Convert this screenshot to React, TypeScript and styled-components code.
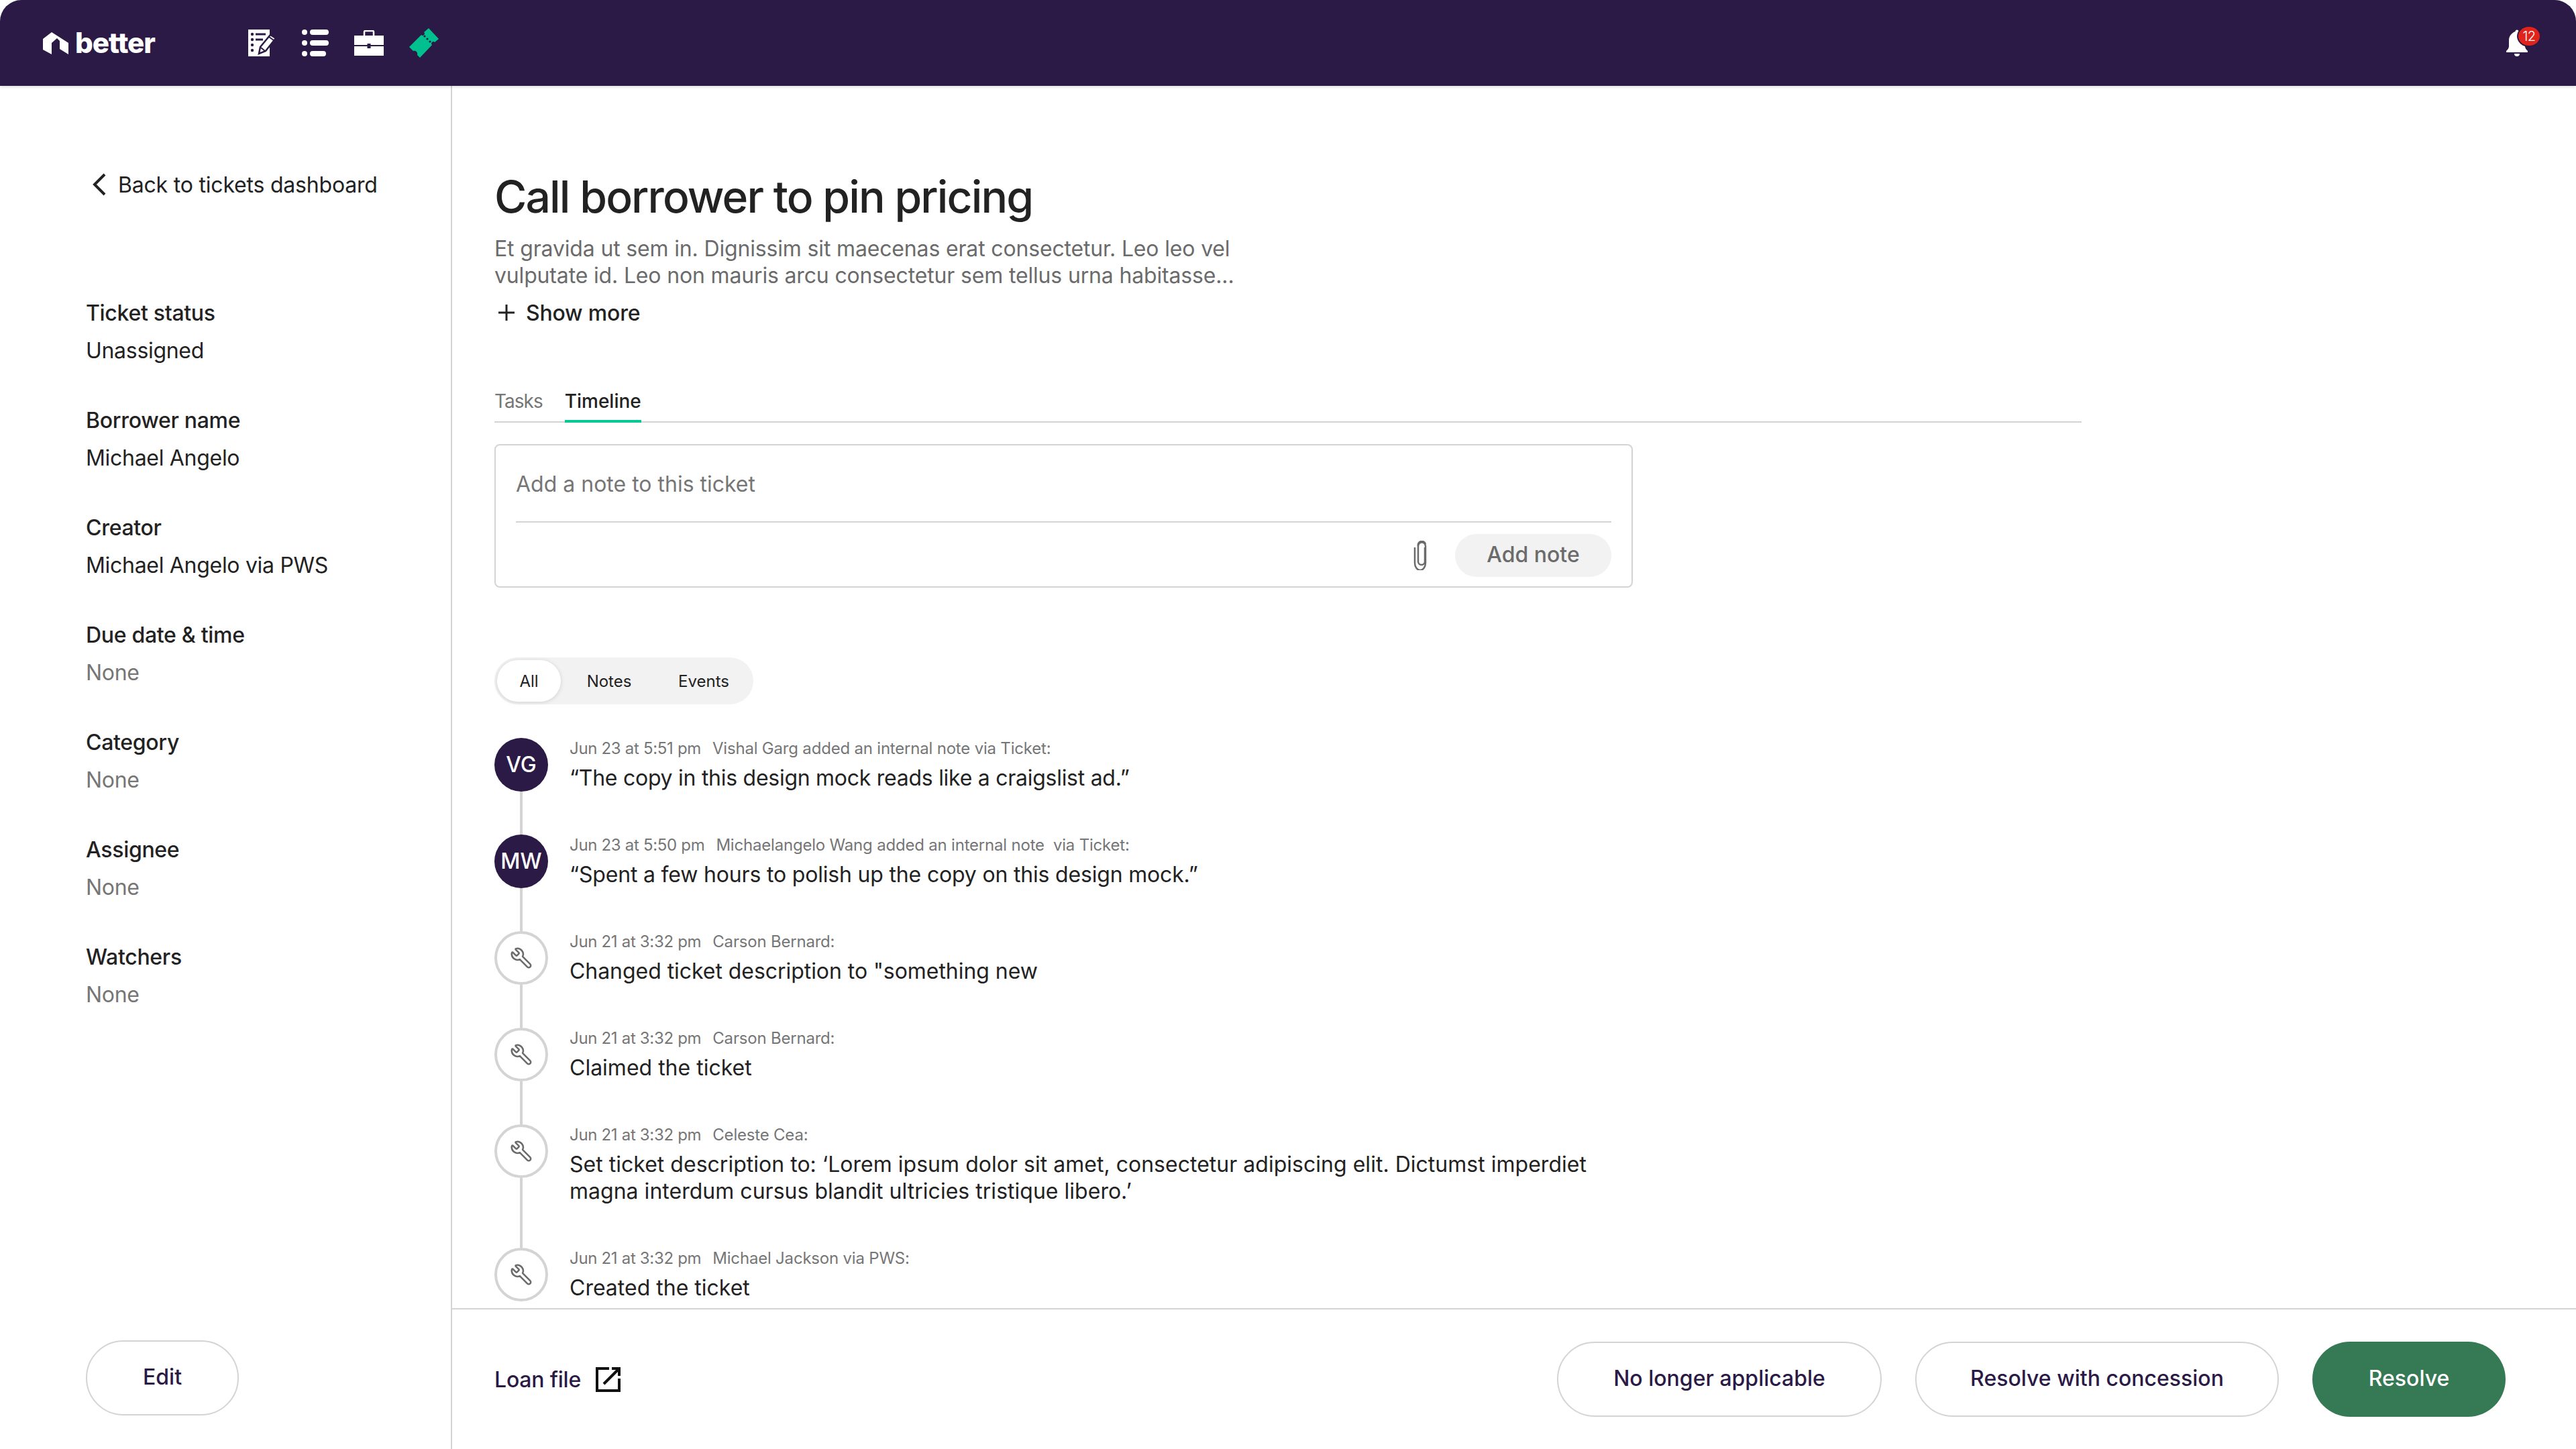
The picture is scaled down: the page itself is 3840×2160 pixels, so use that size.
import React from "react";
import styled, { createGlobalStyle } from "styled-components";
import { Wrench } from "lucide-react";

const Global = createGlobalStyle`
  html, body { margin: 0; padding: 0; background: #fff; }
  body { font-family: Inter, "Liberation Sans", sans-serif; color: #222; }
  * { box-sizing: border-box; }
  svg { display: block; flex: none; }
`;
const Page = styled.div`width: 3840px; height: 2160px; display: flex; flex-direction: column; overflow: hidden; background: #fff;`;
const Header = styled.header`
  height: 128px; flex: none; background: #2b1a45; border-radius: 32px 32px 0 0; display: flex; align-items: center;
  padding: 0 54px 0 64px; box-shadow: 0 2px 4px rgba(0,0,0,.12); position: relative; z-index: 2;
`;
const Logo = styled.div`display: flex; align-items: center; gap: 10px; width: 306px; flex: none;`;
const LogoText = styled.span`font-size: 42px; font-weight: 800; color: #fff; line-height: 44px; letter-spacing: -1px;`;
const NavIcons = styled.nav`display: flex; align-items: center; gap: 38px;`;
const Spacer = styled.div`flex: 1;`;
const BellWrap = styled.div`position: relative; width: 50px; height: 44px; padding-top: 2px;`;
const Badge = styled.span`
  position: absolute; left: 18px; top: -2px; width: 32px; height: 28px; border-radius: 50%; background: #e0241c;
  color: #fff; font-size: 20px; line-height: 28px; text-align: center; box-shadow: 0 0 0 2px #2b1a45; font-weight: 300; letter-spacing: -.5px;
`;
const Body = styled.div`flex: 1; display: flex; min-height: 0;`;
const Sidebar = styled.aside`
  width: 674px; flex: none; border-right: 2px solid #d4d4d4; padding: 127px 0 50px 128px; display: flex; flex-direction: column;
`;
const BackLink = styled.div`display: flex; align-items: center; gap: 18px; height: 40px; font-size: 32px; padding-left: 10px; color: #222; letter-spacing: -.2px;`;
const Fields = styled.div`margin-top: 152px; display: flex; flex-direction: column; gap: 64px;`;
const Field = styled.div`display: flex; flex-direction: column; gap: 16px;`;
const Label = styled.div`font-size: 32px; line-height: 40px; font-weight: 500; color: #222; letter-spacing: -.3px;`;
const Value = styled.div<{ $muted?: boolean }>`font-size: 32px; line-height: 40px; color: ${p => p.$muted ? "#767676" : "#222"}; letter-spacing: -.3px;`;
const EditButton = styled.button`
  margin-top: auto; width: 228px; height: 112px; border-radius: 56px; border: 2px solid #d4d4d4; background: #fff; padding: 0 0 3px;
  font: 500 32px Inter, sans-serif; color: #2b1a45;
`;
const Main = styled.main`flex: 1; min-width: 0; display: flex; flex-direction: column;`;
const Scroll = styled.div`flex: 1; min-height: 0; overflow: hidden; padding: 125px 0 0 63px;`;
const Title = styled.h1`margin: 0; font-size: 66px; line-height: 80px; font-weight: 500; color: #222; letter-spacing: -1.9px;`;
const Description = styled.p`margin: 18px 0 0; font-size: 32px; line-height: 40px; color: #6b6b6b; letter-spacing: -.16px;`;
const ShowMore = styled.div`margin-top: 15px; display: flex; align-items: center; gap: 16px; padding-left: 5px; height: 40px; font-size: 32px; font-weight: 500; color: #222; letter-spacing: -.2px;`;
const Tabs = styled.div`margin-top: 94px; width: 2366px; height: 50px; border-bottom: 2px solid #d4d4d4; display: flex; gap: 33px; align-items: flex-start;`;
const Tab = styled.div<{ $active?: boolean }>`
  height: 50px; font-size: 28px; line-height: 36px; font-weight: ${p => p.$active ? 500 : 400}; color: ${p => p.$active ? "#222" : "#767676"};
  letter-spacing: ${p => p.$active ? "0" : "-1px"};
  border-bottom: 4px solid ${p => p.$active ? "#00c996" : "transparent"};
`;
const NoteBox = styled.div`margin-top: 32px; width: 1697px; height: 214px; border: 2px solid #d4d4d4; border-radius: 8px; padding: 0 30px; display: flex; flex-direction: column;`;
const Placeholder = styled.div`height: 115px; padding-top: 38px; font-size: 32px; line-height: 40px; color: #767676; border-bottom: 2px solid #d4d4d4;`;
const NoteActions = styled.div`display: flex; justify-content: flex-end; align-items: center; gap: 38px; margin-top: 17px;`;
const AddNote = styled.button`width: 233px; height: 64px; border-radius: 32px; border: none; background: #f2f2f2; padding: 0 0 3px; font: 500 32px Inter, sans-serif; color: #6b6b6b;`;
const Filter = styled.div`margin-top: 104px; width: 386px; height: 70px; border-radius: 35px; background: #f2f2f2; display: flex; align-items: center; padding: 0 4px;`;
const FilterItem = styled.div<{ $active?: boolean; $w: number }>`
  width: ${p => p.$w}px; height: 62px; border-radius: 31px; display: flex; align-items: center; justify-content: center; font-size: 24px; color: #222;
  ${p => p.$active ? "background:#fff; box-shadow: 0 1px 6px rgba(0,0,0,.14);" : ""}
`;
const Timeline = styled.div`margin-top: 50px; width: 1700px;`;
const Row = styled.div<{ $h: number }>`height: ${p => p.$h}px; display: flex; gap: 32px;`;
const Rail = styled.div`width: 80px; flex: none; display: flex; flex-direction: column; align-items: center;`;
const Avatar = styled.div`width: 80px; height: 80px; flex: none; border-radius: 50%; background: #2b1a45; color: #fff; font-size: 32px; font-weight: 500; padding-bottom: 2px; display: flex; align-items: center; justify-content: center;`;
const EventDot = styled.div`width: 80px; height: 80px; flex: none; border-radius: 50%; border: 4px solid #d4d4d4; color: #6b6b6b; display: flex; align-items: center; justify-content: center;`;
const Connector = styled.div`width: 4px; flex: 1; background: #d4d4d4;`;
const Entry = styled.div`min-width: 0;`;
const Meta = styled.div`display: flex; gap: 17px; font-size: 24px; line-height: 32px; color: #767676; white-space: pre; letter-spacing: -.2px;`;
const Time = styled.span`letter-spacing: -.32px;`;
const Text = styled.div<{ $track: number }>`margin-top: 8px; font-size: 32px; line-height: 40px; color: #222; letter-spacing: ${p => p.$track}px;`;
const Footer = styled.footer`height: 210px; flex: none; border-top: 2px solid #d4d4d4; display: flex; align-items: center; padding: 0 105px 0 63px; background: #fff;`;
const LoanFile = styled.div`display: flex; align-items: center; gap: 22px; font-size: 32px; font-weight: 500; color: #2b1a45; letter-spacing: -.2px;`;
const Actions = styled.div`margin-left: auto; display: flex; gap: 50px;`;
const Pill = styled.button<{ $w: number; $primary?: boolean }>`
  width: ${p => p.$w}px; height: 112px; border-radius: 56px; padding: 0 0 3px; font: 500 32px Inter, sans-serif;
  border: ${p => p.$primary ? "none" : "2px solid #d4d4d4"}; background: ${p => p.$primary ? "#357a54" : "#fff"}; color: ${p => p.$primary ? "#fff" : "#2b1a45"};
`;

const HouseLogo = () => (
  <svg width="38" height="33" viewBox="0 0 38 33" fill="#fff">
    <path d="M0 10 13 0 38 16V33L25 25V13L21 9 13 16V33L0 26Z" />
  </svg>
);
const NoteIcon = () => (
  <svg width="42" height="40" viewBox="0 0 42 40">
    <path fill="#fff" d="M0 0H32V40H0Z" />
    <g fill="#2b1a45">
      <circle cx="6" cy="7" r="2.2" /><circle cx="6" cy="15" r="2.2" /><circle cx="6" cy="23" r="2.2" /><circle cx="6" cy="31" r="2.2" />
      <rect x="11" y="5.5" width="15" height="3" /><rect x="11" y="13.5" width="11" height="3" />
    </g>
    <path d="M16 36 18 26 33 8 41 13 26 32Z" fill="#fff" stroke="#2b1a45" strokeWidth="2.5" />
    <path d="M19 27 25 32" stroke="#2b1a45" strokeWidth="2" />
    <path d="M31 11 38 16" stroke="#2b1a45" strokeWidth="2" />
  </svg>
);
const ListIcon = () => (
  <svg width="40" height="40" viewBox="0 0 40 40" fill="#fff">
    <circle cx="4" cy="4" r="4" /><circle cx="4" cy="20" r="4" /><circle cx="4" cy="36" r="4" />
    <rect x="12" y="0" width="28" height="8" rx="4" /><rect x="12" y="16" width="28" height="8" rx="4" /><rect x="12" y="32" width="24" height="8" rx="4" />
  </svg>
);
const CaseIcon = () => (
  <svg width="44" height="38" viewBox="0 0 44 38" fill="#fff">
    <path d="M15 8V2.500A1.500 1.500 0 0 1 16.500 1h11A1.500 1.500 0 0 1 29 2.500V8" fill="none" stroke="#fff" strokeWidth="2.5" />
    <path d="M0 8H44V22H24.500V20H19.500V22H0Z" />
    <path d="M0 24H19.500V27H24.500V24H44V38H0Z" />
  </svg>
);
const TicketIcon = () => (
  <svg width="44" height="44" viewBox="0 0 44 44">
    <path fill="#00c08f" d="M29 0 44 16 38 21A2.800 2.800 0 0 0 34 25L16 44 12 40C13 36 10 33 6 34L0 28 18 10A2.800 2.800 0 0 0 22 6Z" />
    <g fill="#2b1a45"><circle cx="23" cy="12" r="1.600" /><circle cx="27" cy="16" r="1.600" /><circle cx="31" cy="20" r="1.600" /></g>
  </svg>
);
const BellIcon = () => (
  <svg width="32" height="40" viewBox="0 0 32 40" fill="#fff">
    <circle cx="16" cy="3" r="2.500" />
    <path d="M16 2C9 4 4 9 4 16V25C4 28 2 30 0 32V34H32V32C30 30 28 28 28 25V16C28 9 23 4 16 2Z" />
    <path d="M12 36H20A4 4 0 0 1 12 36Z" />
  </svg>
);
const Chevron = () => (
  <svg width="20" height="34" viewBox="0 0 20 34" fill="none" stroke="#222" strokeWidth="4"><path d="M18 2 3 17 18 32" /></svg>
);
const Plus = () => (
  <svg width="26" height="26" viewBox="0 0 26 26" stroke="#222" strokeWidth="3"><path d="M13 1V25M1 13H25" /></svg>
);
const Clip = () => (
  <svg width="24" height="44" viewBox="0 0 24 44" fill="none" stroke="#6b6b6b" strokeWidth="2.500">
    <path d="M17 10V31A5 5 0 0 1 7 31V8A5.500 5.500 0 0 1 18 5" />
    <path d="M7 8A5.500 5.500 0 0 1 18 8V33A6.500 9 0 0 1 2 33V10" />
  </svg>
);
const External = () => (
  <svg width="37" height="37" viewBox="0 0 37 37" fill="none" stroke="#111" strokeWidth="4">
    <path d="M20 2H2V35H35V17" />
    <path d="M12 25 33 4" /><path d="M24 2H35V13" />
  </svg>
);

const fields: [string, string, boolean?][] = [
  ["Ticket status", "Unassigned"],
  ["Borrower name", "Michael Angelo"],
  ["Creator", "Michael Angelo via PWS"],
  ["Due date & time", "None", true],
  ["Category", "None", true],
  ["Assignee", "None", true],
  ["Watchers", "None", true],
];
type Ev = { who?: string; time: string; meta: string; text: React.ReactNode; h: number; track: number; last?: boolean };
const events: Ev[] = [
  { who: "VG", time: "Jun 23 at 5:51 pm", meta: "Vishal Garg added an internal note via Ticket:", text: "“The copy in this design mock reads like a craigslist ad.”", h: 144, track: -0.27 },
  { who: "MW", time: "Jun 23 at 5:50 pm", meta: "Michaelangelo Wang added an internal note  via Ticket:", text: "“Spent a few hours to polish up the copy on this design mock.”", h: 144, track: -0.18 },
  { time: "Jun 21 at 3:32 pm", meta: "Carson Bernard:", text: "Changed ticket description to \"something new", h: 144, track: -0.05 },
  { time: "Jun 21 at 3:32 pm", meta: "Carson Bernard:", text: "Claimed the ticket", h: 144, track: 0 },
  { time: "Jun 21 at 3:32 pm", meta: "Celeste Cea:", text: <>Set ticket description to: ‘Lorem ipsum dolor sit amet, consectetur adipiscing elit. Dictumst imperdiet<br />magna interdum cursus blandit ultricies tristique libero.’</>, h: 184, track: 0.02 },
  { time: "Jun 21 at 3:32 pm", meta: "Michael Jackson via PWS:", text: "Created the ticket", h: 90, track: 0, last: true },
];

export default function App() {
  return (
    <Page>
      <Global />
      <Header>
        <Logo><HouseLogo /><LogoText>better</LogoText></Logo>
        <NavIcons><NoteIcon /><ListIcon /><CaseIcon /><TicketIcon /></NavIcons>
        <Spacer />
        <BellWrap><BellIcon /><Badge>12</Badge></BellWrap>
      </Header>
      <Body>
        <Sidebar>
          <BackLink><Chevron />Back to tickets dashboard</BackLink>
          <Fields>
            {fields.map(([l, v, m]) => (
              <Field key={l}><Label>{l}</Label><Value $muted={m}>{v}</Value></Field>
            ))}
          </Fields>
          <EditButton>Edit</EditButton>
        </Sidebar>
        <Main>
          <Scroll>
            <Title>Call borrower to pin pricing</Title>
            <Description>Et gravida ut sem in. Dignissim sit maecenas erat consectetur. Leo leo vel<br />vulputate id. Leo non mauris arcu consectetur sem tellus urna habitasse...</Description>
            <ShowMore><Plus />Show more</ShowMore>
            <Tabs><Tab>Tasks</Tab><Tab $active>Timeline</Tab></Tabs>
            <NoteBox>
              <Placeholder>Add a note to this ticket</Placeholder>
              <NoteActions><Clip /><AddNote>Add note</AddNote></NoteActions>
            </NoteBox>
            <Filter>
              <FilterItem $active $w={95}>All</FilterItem>
              <FilterItem $w={144}>Notes</FilterItem>
              <FilterItem $w={138}>Events</FilterItem>
            </Filter>
            <Timeline>
              {events.map((e, i) => (
                <Row key={i} $h={e.h}>
                  <Rail>
                    {e.who ? <Avatar>{e.who}</Avatar> : <EventDot><Wrench size={34} strokeWidth={1.8} style={{ transform: "scaleX(-1)" }} /></EventDot>}
                    {!e.last && <Connector />}
                  </Rail>
                  <Entry>
                    <Meta><Time>{e.time}</Time><span>{e.meta}</span></Meta>
                    <Text $track={e.track}>{e.text}</Text>
                  </Entry>
                </Row>
              ))}
            </Timeline>
          </Scroll>
          <Footer>
            <LoanFile>Loan file<External /></LoanFile>
            <Actions>
              <Pill $w={484}>No longer applicable</Pill>
              <Pill $w={542}>Resolve with concession</Pill>
              <Pill $w={288} $primary>Resolve</Pill>
            </Actions>
          </Footer>
        </Main>
      </Body>
    </Page>
  );
}
